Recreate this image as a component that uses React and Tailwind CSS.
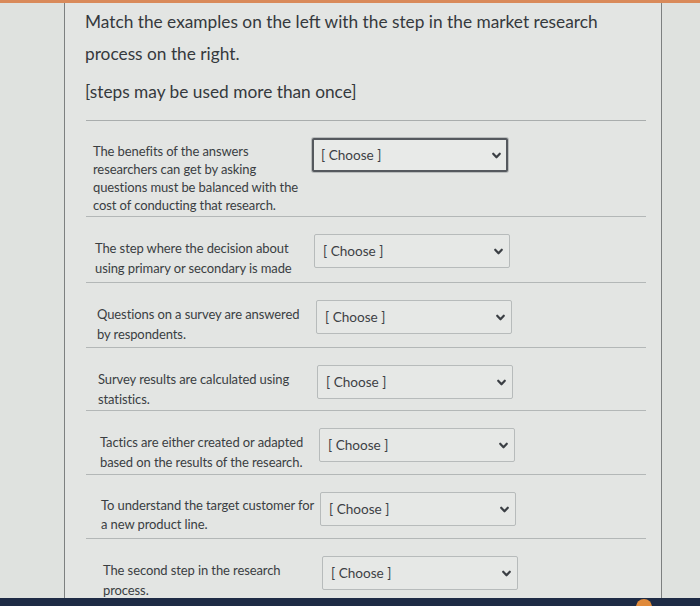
import React from "react";

const rows = [
  {
    text: "The benefits of the answers researchers can get by asking questions must be balanced with the cost of conducting that research.",
    height: "h-[96px]",
    shift: "ml-[0px]",
    leading: "leading-[18px]",
    focused: true,
  },
  {
    text: "The step where the decision about using primary or secondary is made",
    height: "h-[66px]",
    shift: "ml-[2px]",
    leading: "leading-[20px]",
  },
  {
    text: "Questions on a survey are answered by respondents.",
    height: "h-[65px]",
    shift: "ml-[4px]",
    leading: "leading-[20px]",
  },
  {
    text: "Survey results are calculated using statistics.",
    height: "h-[63px]",
    shift: "ml-[5px]",
    leading: "leading-[20px]",
  },
  {
    text: "Tactics are either created or adapted based on the results of the research.",
    height: "h-[64px]",
    shift: "ml-[7px]",
    leading: "leading-[20px]",
  },
  {
    text: "To understand the target customer for a new product line.",
    height: "h-[64px]",
    shift: "ml-[8px]",
    leading: "leading-[19px]",
  },
  {
    text: "The second step in the research process.",
    height: "h-[64px]",
    shift: "ml-[10px]",
    leading: "leading-[20px]",
  },
];

function Chevron() {
  return (
    <svg width="11" height="11" viewBox="0 0 10 10" className="text-[#3b3f44]">
      <path d="M2 3.4 L5 6.6 L8 3.4" fill="none" stroke="currentColor" strokeWidth="2" strokeLinecap="round" strokeLinejoin="round" />
    </svg>
  );
}

function ChooseSelect({ focused }) {
  return (
    <div
      className={
        focused
          ? "flex h-[34px] w-[196px] shrink-0 items-center justify-between rounded-[2px] border-2 border-[#55595e] bg-[#e8eae8] pl-[7px] pr-[4px] shadow-[0_0_0_1px_#b9bcbc]"
          : "flex h-[34px] w-[196px] shrink-0 items-center justify-between rounded-[2px] border border-[#b7bbbb] bg-[#e6e8e6] pl-[8px] pr-[5px]"
      }
    >
      <span className="text-[13.6px] text-[#3d4145]">[ Choose ]</span>
      <Chevron />
    </div>
  );
}

export default function App() {
  return (
    <div className="relative h-[606px] w-[700px] overflow-hidden bg-[#dfe2df] font-['Lato','Liberation_Sans',sans-serif] text-[#35393d]">
      <div className="h-[3px] w-full bg-[#d98a5a]" />
      <div className="ml-[64px] h-[595px] w-[598px] border-x border-[#7d8080] bg-[#e3e5e3]">
        <div className="pl-[20px] pt-[3px]">
          <p className="w-[540px] text-[17.3px] leading-[32px]">
            Match the examples on the left with the step in the market research process on the right.
          </p>
          <p className="mt-[6px] text-[17.3px] leading-[32px]">[steps may be used more than once]</p>
        </div>
        <div className="ml-[21px] mt-[12px] w-[560px] border-t border-[#a9adad]">
          {rows.map((row, i) => (
            <div key={i} className={`${row.height} border-b border-[#b3b7b7]`}>
              <div className={`${row.shift} flex items-start pl-[7px] pt-[17px]`}>
                <p className={`w-[219px] pr-[2px] pt-[4px] text-[13px] tracking-[-0.1px] text-[#3a3e42] ${row.leading}`}>
                  {row.text}
                </p>
                <ChooseSelect focused={row.focused} />
              </div>
            </div>
          ))}
        </div>
      </div>
      <div className="relative h-[8px] w-full bg-[#1e2b45]">
        <div className="absolute left-[636px] top-[1px] h-[16px] w-[16px] rounded-full bg-[#e08a3a]" />
      </div>
    </div>
  );
}
